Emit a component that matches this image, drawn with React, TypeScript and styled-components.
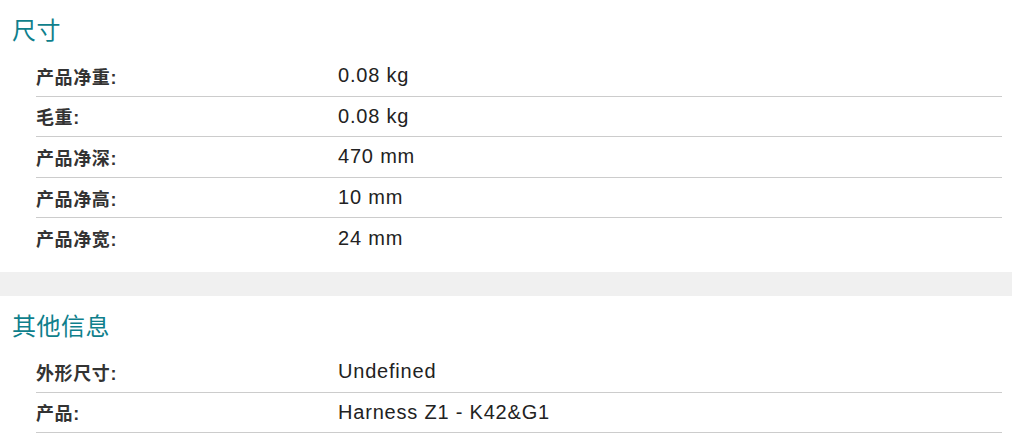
import React from "react";
import styled, { createGlobalStyle } from "styled-components";

const GlobalStyle = createGlobalStyle`
  html, body { margin: 0; padding: 0; background: #ffffff; }
  body { font-family: "Liberation Sans", "Noto Sans CJK SC", sans-serif; }
`;

const Page = styled.div`
  width: 1012px;
  display: flex;
  flex-direction: column;
`;

const Section = styled.section`
  padding: 14px 10px 13px 12px;
  display: flex;
  flex-direction: column;
`;

const Band = styled.div`
  height: 24px;
  background: #f0f0f0;
`;

const Heading = styled.h2`
  margin: 0 0 10px 0;
  font-family: "Noto Sans CJK SC", sans-serif;
  font-weight: 400;
  font-size: 24px;
  line-height: 30px;
  padding-bottom: 2px;
  letter-spacing: 0.5px;
  color: #0f7f8c;
`;

const List = styled.dl`
  margin: 0 0 0 24px;
  display: flex;
  flex-direction: column;
`;

const Row = styled.div<{ $last?: boolean }>`
  display: grid;
  grid-template-columns: 302px 1fr;
  align-items: center;
  height: 39.6px;
  border-bottom: 1px solid ${(p) => (p.$last ? "transparent" : "#cccccc")};
`;

const Label = styled.dt`
  margin: 0;
  font-family: "Liberation Sans", "Noto Sans CJK SC", sans-serif;
  font-weight: 700;
  font-size: 18px;
  letter-spacing: 0.6px;
  color: #333333;
`;

const Value = styled.dd`
  margin: 0;
  font-family: "Liberation Sans", sans-serif;
  font-size: 20px;
  letter-spacing: 0.8px;
  color: #222222;
`;

type Item = { label: string; value: string };

const dims: Item[] = [
  { label: "产品净重:", value: "0.08 kg" },
  { label: "毛重:", value: "0.08 kg" },
  { label: "产品净深:", value: "470 mm" },
  { label: "产品净高:", value: "10 mm" },
  { label: "产品净宽:", value: "24 mm" },
];

const other: Item[] = [
  { label: "外形尺寸:", value: "Undefined" },
  { label: "产品:", value: "Harness Z1 - K42&G1" },
];

const Spec = ({ items, lastBorder }: { items: Item[]; lastBorder: boolean }) => (
  <List>
    {items.map((it, i) => (
      <Row key={it.label + i} $last={!lastBorder && i === items.length - 1}>
        <Label>{it.label}</Label>
        <Value>{it.value}</Value>
      </Row>
    ))}
  </List>
);

export default function App() {
  return (
    <Page>
      <GlobalStyle />
      <Section>
        <Heading>尺寸</Heading>
        <Spec items={dims} lastBorder={false} />
      </Section>
      <Band />
      <Section>
        <Heading>其他信息</Heading>
        <Spec items={other} lastBorder={true} />
      </Section>
    </Page>
  );
}
